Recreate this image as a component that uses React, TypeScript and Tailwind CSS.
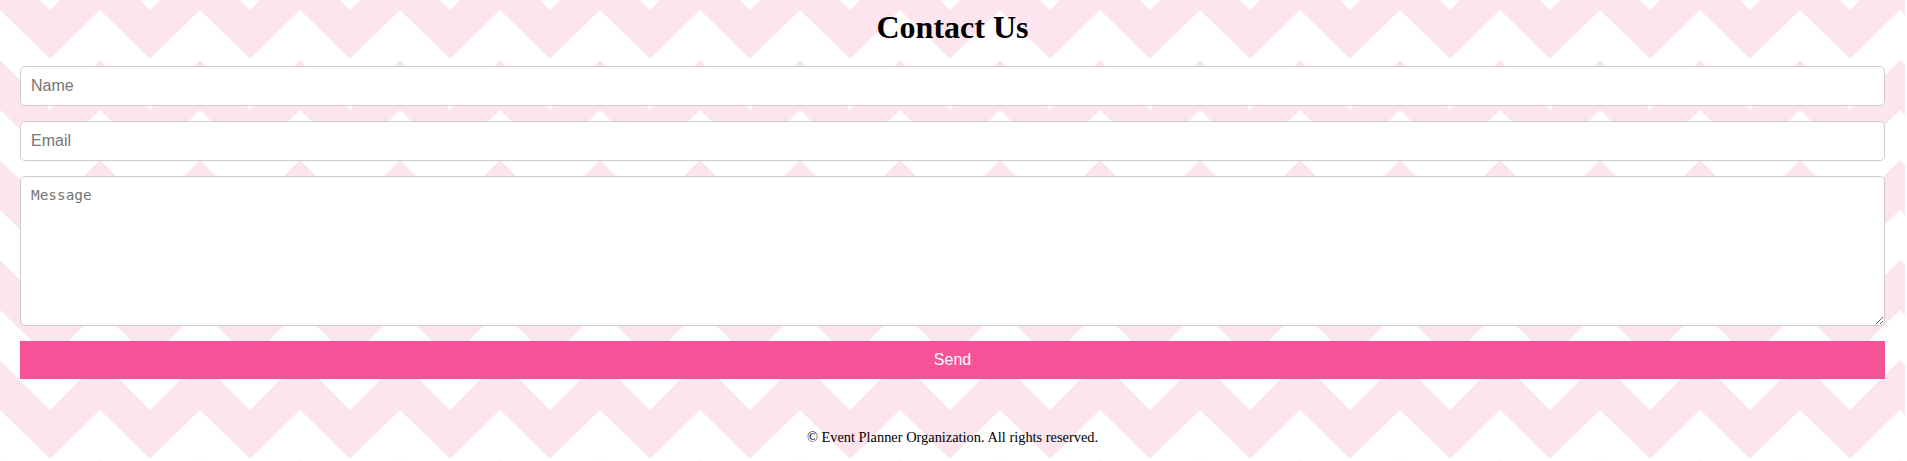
const field =
  "block h-[40px] w-full rounded-[5px] border border-[#cccccc] bg-white px-[10px] text-[16px] text-black outline-none placeholder:text-[#757575]";

/* ---------- Pink chevron background ---------- */
function Chevrons() {
  return (
    <svg className="pointer-events-none absolute inset-0 h-full w-full" aria-hidden="true">
      <defs>
        <pattern id="chev" width="100" height="100" patternUnits="userSpaceOnUse">
          <polygon points="0,-40 50,10 100,-40 100,10 50,59 0,10" fill="#fce5ef" />
          <polygon points="0,60 50,110 100,60 100,110 50,159 0,110" fill="#fce5ef" />
        </pattern>
      </defs>
      <rect width="100%" height="100%" fill="url(#chev)" />
    </svg>
  );
}

export default function App() {
  return (
    <div className="min-h-[461px] w-full bg-white">
      <div
        className="relative mr-[2px] min-h-[461px] overflow-hidden"
        style={{ fontFamily: '"Liberation Serif", "Times New Roman", serif' }}
      >
        <Chevrons />

        <div className="relative z-10 px-[20px] pt-[9px]">
          <h1 className="h-[37px] text-center text-[32px] font-bold leading-[37px] text-black">
            Contact Us
          </h1>

          {/* form */}
          <form
            className="mt-[20px] flex flex-col gap-[15px]"
            style={{ fontFamily: '"Liberation Sans", Arial, sans-serif' }}
            onSubmit={(e) => e.preventDefault()}
          >
            <input type="text" placeholder="Name" className={field} />
            <input type="email" placeholder="Email" className={field} />
            <textarea
              placeholder="Message"
              className="block h-[150px] w-full rounded-[5px] border border-[#cccccc] bg-white px-[10px] py-[10px] text-[14.4px] leading-[17px] text-black outline-none placeholder:text-[#757575]"
              style={{ fontFamily: '"DejaVu Sans Mono", "Liberation Mono", monospace' }}
            />
            <button
              type="submit"
              className="h-[38px] w-full bg-[#f75399] text-[16px] text-white"
            >
              Send
            </button>
          </form>

          <footer className="mt-[50px] pb-[14px] text-center text-[14.4px] leading-[17px] text-black">
            © Event Planner Organization. All rights reserved.
          </footer>
        </div>
      </div>
    </div>
  );
}
